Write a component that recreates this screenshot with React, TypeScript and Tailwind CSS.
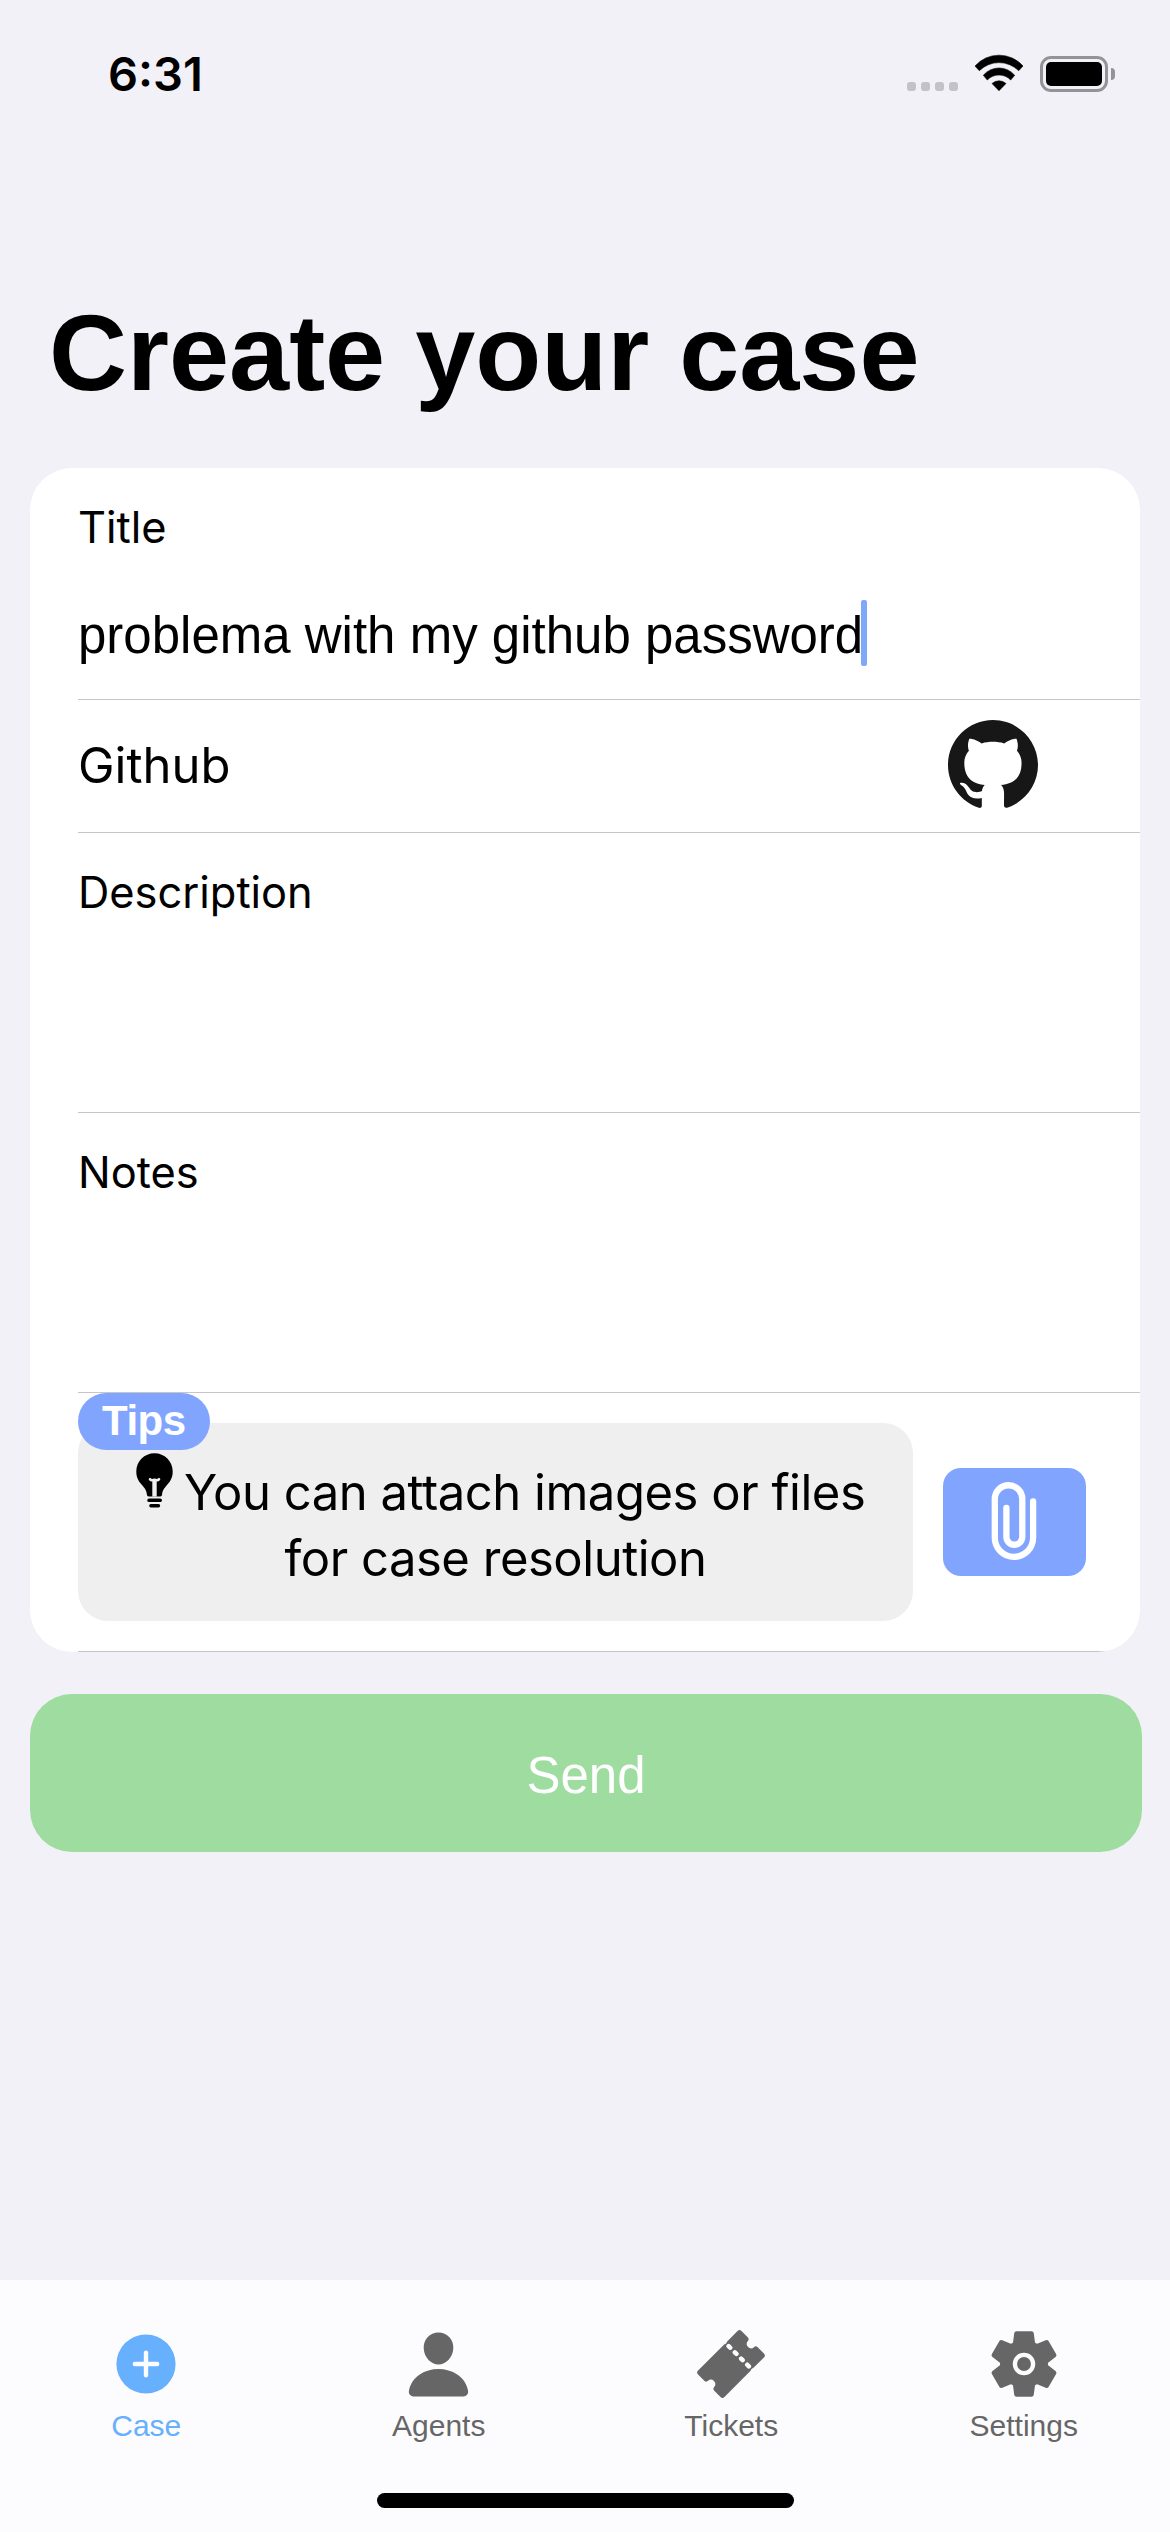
import React from "react";
import type { ReactNode } from "react";
import { SiGithub } from "react-icons/si";
import { IoPerson, IoTicket } from "react-icons/io5";

function WifiIcon() {
  return (
    <svg width="50" height="38" viewBox="0 0 50 38" stroke="black" strokeWidth="0.6" strokeLinejoin="round">
      <path d="M1 12A32 32 0 0 1 49 12L44.7 16.7A28 28 0 0 0 5.3 16.7Z" />
      <path d="M9.3 21.3A20.5 20.5 0 0 1 40.7 21.3L36.7 26A16.2 16.2 0 0 0 13.3 26Z" />
      <path d="M18 29.5A10.5 10.5 0 0 1 32 29.5L25 36.7Z" />
    </svg>
  );
}

function BatteryIcon() {
  return (
    <div className="flex items-center gap-[3px]">
      <div className="h-9 w-[68px] rounded-[11px] border-[3px] border-[#949398] p-[3px]">
        <div className="h-full w-full rounded-[5px] bg-black" />
      </div>
      <div className="h-3 w-1 rounded-r-full bg-[#949398]" />
    </div>
  );
}

function StatusBar() {
  return (
    <header className="flex h-[148px] items-start justify-between pr-[55px] pl-[108px]">
      <span className="mt-[46px] font-[Inter,sans-serif] text-[47px] leading-[56px] font-semibold">6:31</span>
      <div className="mt-[54px] flex items-start">
        <div className="mt-7 flex gap-[5px]">
          {[0, 1, 2, 3].map((dot) => (
            <div key={dot} className="size-[9px] rounded-[3px] bg-[#c3c2c8]" />
          ))}
        </div>
        <div className="ml-4">
          <WifiIcon />
        </div>
        <div className="mt-0.5 ml-4">
          <BatteryIcon />
        </div>
      </div>
    </header>
  );
}

function BulbIcon() {
  return (
    <svg width="37" height="56" viewBox="0 0 37 56">
      <path d="M18.5 0.3C8.4 0.3 0.3 8.3 0.3 18.4C0.3 24.5 2.6 28 6 32C9.5 36 10.6 38 10.9 41.5Q11 43.4 12.7 43.4H24.3Q26 43.4 26.1 41.5C26.4 38 27.5 36 31 32C34.4 28 36.7 24.5 36.7 18.4C36.7 8.3 28.6 0.3 18.5 0.3Z" />
      <path
        d="M14 26.2C15.5 28.2 17 26.8 18.5 26.8C20 26.8 21.5 28.2 23 26.2"
        fill="none"
        stroke="#efefef"
        strokeWidth="2.6"
        strokeLinecap="round"
      />
      <path d="M16.3 27H20.7V43.6H16.3Z" fill="#efefef" />
      <rect x="11.3" y="45.6" width="14.6" height="3.5" rx="1.7" />
      <rect x="13.2" y="51" width="11" height="3.5" rx="1.7" />
    </svg>
  );
}

function PaperclipIcon() {
  return (
    <svg width="52" height="86" viewBox="0 0 52 86" fill="none" stroke="white" strokeWidth="6.3" strokeLinecap="round">
      <path d="M45.1 23.5V59.7A19.15 19.15 0 0 1 6.8 59.7V21A13.75 13.75 0 0 1 34.3 21V58.8A7.95 7.95 0 0 1 18.4 58.8V30" />
    </svg>
  );
}

function PlusCircleIcon() {
  return (
    <svg width="60" height="60" viewBox="-30 -30 60 60">
      <circle r="29.6" fill="#67b0fd" />
      <path d="M-11.2 0H11.2M0 -11.2V11.2" stroke="#fcfcfe" strokeWidth="4.4" strokeLinecap="round" />
    </svg>
  );
}

function GearIcon() {
  return (
    <svg width="68" height="68" viewBox="-34 -34 68 68" fill="#666666">
      <circle r="24" />
      {[0, 60, 120, 180, 240, 300].map((angle) => (
        <path
          key={angle}
          transform={`rotate(${angle})`}
          d="M-9 -18L-7.4 -30.4H7.4L9 -18Z"
          stroke="#666666"
          strokeWidth="4.8"
          strokeLinejoin="round"
        />
      ))}
      <circle r="9.1" stroke="#fcfcfe" strokeWidth="4.3" />
    </svg>
  );
}

function Row({ className, children }: { className: string; children: ReactNode }) {
  return <div className={`ml-12 border-b border-[#c6c6c8] ${className}`}>{children}</div>;
}

function Label({ children }: { children: ReactNode }) {
  return <div className="font-[Inter,sans-serif] text-[43.4px] leading-[52px]">{children}</div>;
}

function CaseForm() {
  return (
    <section className="ml-[30px] w-[1110px] overflow-hidden rounded-[42px] bg-white">
      <Row className="h-[232px] pt-[33px]">
        <Label>Title</Label>
        <div className="mt-[47px] flex h-[66px]">
          <span className="text-[51px] leading-[72px] whitespace-nowrap">problema with my github password</span>
          <div className="-ml-0.5 h-full w-1.5 rounded-[2px] bg-[#7fa9f8]" />
        </div>
      </Row>
      <Row className="flex h-[133px] justify-between pr-[102px]">
        <span className="mt-9 font-[Inter,sans-serif] text-[49px] leading-[60px]">Github</span>
        <SiGithub className="mt-[19px] text-[#171717]" size={90} />
      </Row>
      <Row className="h-[280px] pt-[33px]">
        <Label>Description</Label>
      </Row>
      <Row className="h-[280px] pt-[33px]">
        <Label>Notes</Label>
      </Row>
      <Row className="flex h-[259px] items-center gap-[30px]">
        <div className="relative h-[198px] w-[835px] rounded-[30px] bg-[#efefef] pt-[37px] font-[Inter,sans-serif] text-[49px] leading-[66px] tracking-[-0.48px] whitespace-nowrap">
          <div className="absolute -top-[30px] left-0 h-[57px] w-[132px] rounded-full bg-[#81a5ff] pl-6 font-['Liberation_Sans',sans-serif] text-[42px] leading-[55px] font-bold tracking-[-0.5px] text-white">
            Tips
          </div>
          <div className="flex h-[66px] items-start pl-[58px]">
            <div className="-mt-[7px] mr-[11px]">
              <BulbIcon />
            </div>
            <span>You can attach images or files</span>
          </div>
          <div className="text-center">for case resolution</div>
        </div>
        <button className="flex h-[108px] w-[143px] items-start rounded-[18px] bg-[#81a5ff] pt-2.5 pl-[45px]" aria-label="Attach file">
          <PaperclipIcon />
        </button>
      </Row>
    </section>
  );
}

function Tab({ label, active = false, children }: { label: string; active?: boolean; children: ReactNode }) {
  return (
    <div className={`flex flex-1 flex-col items-center pt-11 ${active ? "text-[#67b0fd]" : "text-[#666666]"}`}>
      <div className="flex h-20 items-center justify-center">{children}</div>
      <span className="mt-1 text-[30px] leading-9">{label}</span>
    </div>
  );
}

export default function App() {
  return (
    <div className="flex h-[2532px] w-[1170px] flex-col overflow-hidden bg-[#f2f1f7] font-['Liberation_Sans',sans-serif] text-black">
      <StatusBar />
      <main className="flex-1 pt-[145px]">
        <h1 className="ml-[49px] text-[108px] leading-[120px] font-bold whitespace-nowrap">Create your case</h1>
        <div className="mt-[55px]">
          <CaseForm />
        </div>
        <button className="mt-[42px] ml-[30px] block h-[158px] w-[1112px] rounded-[42px] bg-[#9edca0] pt-1.5 text-[51px] text-white">
          Send
        </button>
      </main>
      <nav className="h-[252px] bg-[#fcfcfe]">
        <div className="flex h-[213px]">
          <Tab label="Case" active>
            <PlusCircleIcon />
          </Tab>
          <Tab label="Agents">
            <IoPerson size={73} />
          </Tab>
          <Tab label="Tickets">
            <IoTicket size={72} />
          </Tab>
          <Tab label="Settings">
            <GearIcon />
          </Tab>
        </div>
        <div className="mx-auto h-[15px] w-[417px] rounded-full bg-black" />
      </nav>
    </div>
  );
}
